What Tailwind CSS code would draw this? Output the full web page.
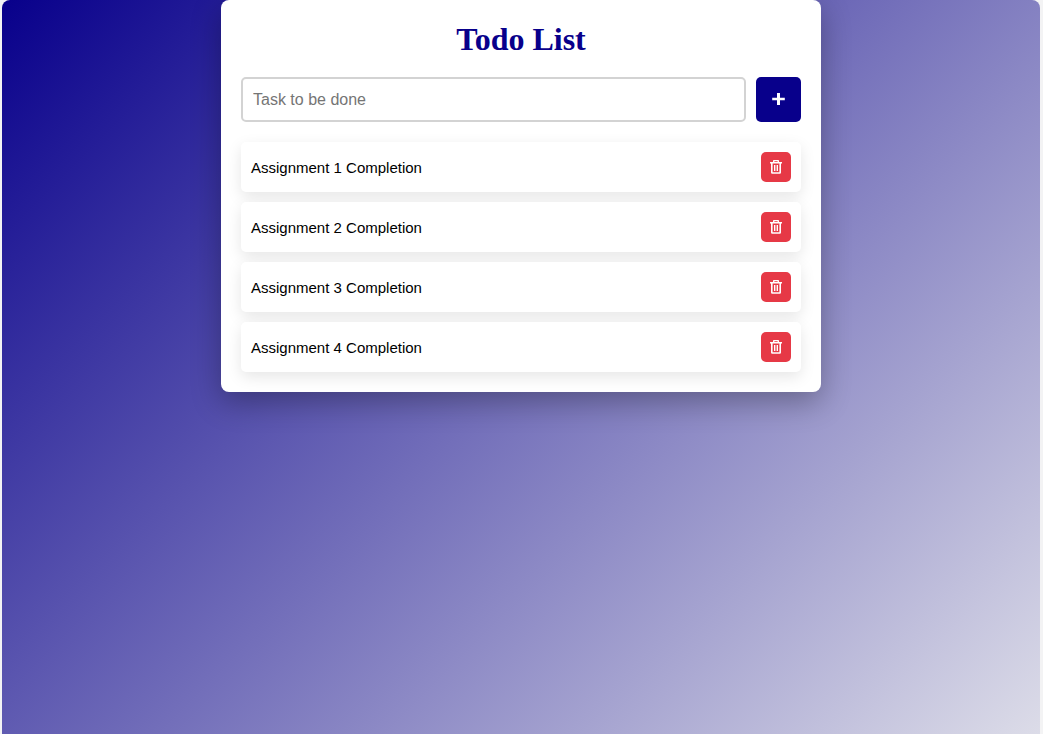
<!DOCTYPE html>
<html lang="en">
<head>
<meta charset="utf-8">
<meta name="viewport" content="width=device-width, initial-scale=1">
<title>Todo List</title>
<script src="https://cdn.jsdelivr.net/npm/@tailwindcss/browser@4"></script>
</head>
<body class="flex h-screen overflow-hidden bg-[#f3f3f4] pr-[3px] pl-[2px] font-['Liberation_Sans',Arial,sans-serif]">
<svg class="hidden" aria-hidden="true">
  <symbol id="trash" viewBox="0 0 16 16"><path fill-rule="evenodd" d="M5 1.7Q5 1 5.8 1h4.4q.8 0 .8.7V3h3v1.6h-1V13.6q0 1.2-1.2 1.2H4.2Q3 14.800 3 13.600V4.600H2V3h3zM6.400 2.200V3h3.200V2.200zM4.600 4.600V13.300h6.800V4.600zM6 6h1.400v6H6zM8.600 6H10v6H8.600z"/></symbol>
</svg>
<div class="min-w-0 flex-1 rounded-t-[8px] bg-[linear-gradient(135deg,#08008b,#dcdce8)]">
  <main class="mx-auto w-full max-w-[600px] rounded-[8px] bg-white p-5 shadow-[0_10px_30px_rgba(0,0,0,0.3)]">
    <h1 class="text-center font-['Liberation_Serif','Times_New_Roman',serif] text-[32px] leading-[39px] font-bold text-[#08008b]">Todo List</h1>
    <form class="mt-[18px] flex gap-[10px]" onsubmit="return false">
      <input type="text" aria-label="Task to be done" placeholder="Task to be done" class="h-[45px] min-w-0 flex-1 rounded-[5px] border-2 border-[#d3d3d3] px-[10px] text-base text-black placeholder:text-[#757575]">
      <button type="submit" aria-label="Add task" class="flex size-[45px] items-center justify-center rounded-[5px] bg-[#08008b] text-white">
        <svg class="size-[21px]" viewBox="0 0 21 21" fill="currentColor"><path d="M9 4h3v4.800h4.800v2.400H12V16H9v-4.800H4.200V8.800H9z"/></svg>
      </button>
    </form>
    <ul class="mt-5 flex flex-col gap-[10px] text-[15px] text-black">
      <li class="flex items-center justify-between rounded-[5px] bg-white p-[10px] shadow-[0_5px_15px_rgba(0,0,0,0.1)]"><span class="pt-0.5">Assignment 1 Completion</span><button type="button" aria-label="Delete Assignment 1 Completion" class="flex size-[30px] items-center justify-center rounded-[5px] bg-[#e63946] text-white"><svg class="size-4 fill-current"><use href="#trash"/></svg></button></li>
      <li class="flex items-center justify-between rounded-[5px] bg-white p-[10px] shadow-[0_5px_15px_rgba(0,0,0,0.1)]"><span class="pt-0.5">Assignment 2 Completion</span><button type="button" aria-label="Delete Assignment 2 Completion" class="flex size-[30px] items-center justify-center rounded-[5px] bg-[#e63946] text-white"><svg class="size-4 fill-current"><use href="#trash"/></svg></button></li>
      <li class="flex items-center justify-between rounded-[5px] bg-white p-[10px] shadow-[0_5px_15px_rgba(0,0,0,0.1)]"><span class="pt-0.5">Assignment 3 Completion</span><button type="button" aria-label="Delete Assignment 3 Completion" class="flex size-[30px] items-center justify-center rounded-[5px] bg-[#e63946] text-white"><svg class="size-4 fill-current"><use href="#trash"/></svg></button></li>
      <li class="flex items-center justify-between rounded-[5px] bg-white p-[10px] shadow-[0_5px_15px_rgba(0,0,0,0.1)]"><span class="pt-0.5">Assignment 4 Completion</span><button type="button" aria-label="Delete Assignment 4 Completion" class="flex size-[30px] items-center justify-center rounded-[5px] bg-[#e63946] text-white"><svg class="size-4 fill-current"><use href="#trash"/></svg></button></li>
    </ul>
  </main>
</div>
</body>
</html>
